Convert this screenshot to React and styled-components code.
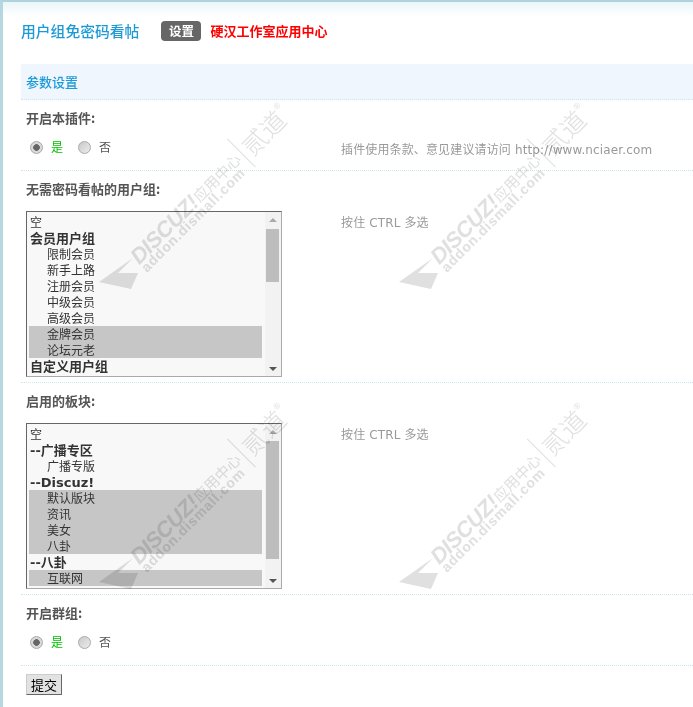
import React from "react";
import styled, { createGlobalStyle } from "styled-components";

const Global = createGlobalStyle`
  html, body { margin: 0; padding: 0; background: #fff; }
  body { font: 13px/16px "Noto Sans CJK SC", "Liberation Sans", sans-serif; color: #555; }
`;

const Page = styled.div`
  position: relative;
  box-sizing: border-box;
  width: 693px;
  height: 707px;
  overflow: hidden;
  padding: 0 0 0 18px;
  border-left: 3px solid #b4d7e0;
  border-top: 2px solid #aed3dd;
  background: linear-gradient(#eaf5fa, #fff 14px);
`;

const TitleBar = styled.div`
  display: flex;
  align-items: center;
  height: 62px;
  padding-bottom: 4px;
  box-sizing: border-box;
`;

const PluginName = styled.h1`
  margin: 0 22px 0 0;
  font-size: 14.8px;
  font-weight: 500;
  color: #1c9ad6;
  white-space: nowrap;
`;

const SettingsBadge = styled.span`
  display: block;
  width: 40px;
  height: 20px;
  line-height: 20px;
  border-radius: 4px;
  background: #666;
  color: #fff;
  font-size: 12.5px;
  font-weight: 700;
  text-align: center;
  margin-right: 9px;
`;

const StudioLink = styled.span`
  color: #f00;
  font-size: 13px;
  font-weight: 700;
`;

const SectionHead = styled.h2`
  margin: 0;
  height: 35px;
  line-height: 36px;
  padding-left: 5px;
  background: #f0f6fd;
  border-bottom: 1px dotted #cfe3ee;
  font-size: 13px;
  font-weight: 500;
  color: #1c9ad6;
`;

const Field = styled.section`
  border-bottom: 1px dotted #cfe3ee;
  padding-left: 5px;
`;

const FieldLabel = styled.div`
  height: 36px;
  line-height: 36px;
  font-weight: 700;
  color: #555;
  font-size: 13px;
`;

const FieldBody = styled.div`
  display: grid;
  grid-template-columns: 315px 1fr;
  align-items: start;
  padding-top: ${(p) => p.$pt}px;
  padding-bottom: ${(p) => p.$pb}px;
`;

const RadioRow = styled.div`
  display: flex;
  align-items: center;
  height: 22px;
  padding-left: 4px;
`;

const Radio = styled.input.attrs({ type: "radio" })`
  appearance: none;
  box-sizing: border-box;
  width: 13px;
  height: 13px;
  margin: 0 8px 0 0;
  border-radius: 50%;
  border: 1px solid #aaa;
  background: ${(p) =>
    p.defaultChecked
      ? "radial-gradient(circle, #666 0 3px, #d8d8d8 3.6px)"
      : "linear-gradient(135deg, #c9c9c9, #ececec)"};
`;

const RadioText = styled.label`
  color: ${(p) => p.$color};
  font-size: 12px;
  margin-right: 15px;
`;

const Hint = styled.div`
  color: #999;
  font: 12px/16px "DejaVu Sans", "Noto Sans CJK SC", sans-serif;
  letter-spacing: 0.14px;
  white-space: nowrap;
  padding-top: ${(p) => p.$top}px;
`;

const Listbox = styled.div`
  display: flex;
  box-sizing: border-box;
  width: 256px;
  height: 166px;
  border: 1px solid #aaa;
  border-top-color: #666;
  border-left-color: #666;
  background: #f8f8f8;
  overflow: hidden;
`;

const OptionList = styled.div`
  flex: 1;
  padding: 2px 3px 0 2px;
  overflow: hidden;
  color: #333;
`;

const Option = styled.div`
  height: 16px;
  line-height: 18px;
  padding-left: ${(p) => (p.$child ? 18 : 1)}px;
  font-family: "DejaVu Sans", "Noto Sans CJK SC", sans-serif;
  font-size: ${(p) => (p.$group ? 13 : 12)}px;
  white-space: nowrap;
  font-weight: ${(p) => (p.$group ? 700 : 400)};
  background: ${(p) => (p.$selected ? "#c6c6c6" : "transparent")};
`;

const ScrollTrack = styled.div`
  position: relative;
  width: 16px;
  background: #f2f2f2;
  flex: none;
`;

const Thumb = styled.div`
  position: absolute;
  left: 1px;
  top: ${(p) => p.$top}px;
  width: 13px;
  height: ${(p) => p.$h}px;
  background: #bdbdbd;
`;

const Arrow = styled.span`
  position: absolute;
  left: 4px;
  ${(p) => (p.$down ? "bottom: 5px;" : "top: 6px;")}
  border-left: 4px solid transparent;
  border-right: 4px solid transparent;
  ${(p) => (p.$down ? "border-top: 4px solid #555;" : "border-bottom: 4px solid #aaa;")}
`;

const SubmitBar = styled.div`
  padding: 8px 0 0 5px;
`;

const SubmitButton = styled.button`
  box-sizing: border-box;
  display: block;
  width: 36px;
  height: 21px;
  padding: 0;
  font: 13px/18px "Noto Sans CJK SC", sans-serif;
  color: #000;
  background: #e2e2e2;
  border: 1px solid;
  border-color: #ccc #666 #666 #ccc;
`;

const WatermarkLayer = styled.div`
  position: absolute;
  inset: 0;
  pointer-events: none;
  mix-blend-mode: multiply;
`;

const MarkTile = styled.div`
  position: absolute;
  left: ${(p) => p.$x}px;
  top: ${(p) => p.$y}px;
  width: 0;
  height: 0;
  color: #e0e0e0;
`;

const MarkArrow = styled.svg`
  position: absolute;
  left: -1px;
  top: 1px;
`;

const MarkText = styled.div`
  position: absolute;
  left: 25px;
  top: -6px;
  width: 270px;
  height: 50px;
  transform: rotate(-45deg);
  transform-origin: 0 0;
  white-space: nowrap;
`;

const MarkTop = styled.div`
  position: absolute;
  left: 0;
  top: 0;
  display: flex;
  align-items: center;
  height: 26px;
`;

const MarkBrand = styled.span`
  font: italic 700 22px/26px "Liberation Sans", sans-serif;
  letter-spacing: -0.5px;
`;

const MarkCn = styled.span`
  font-size: 15px;
  margin-left: 1px;
`;

const MarkBar = styled.span`
  width: 1px;
  height: 40px;
  background: #e0e0e0;
  margin: 0 5px 0 4px;
`;

const MarkName = styled.span`
  font-size: 25px;
  font-weight: 300;
`;

const MarkReg = styled.span`
  font: 9px "Liberation Sans", sans-serif;
  align-self: flex-start;
`;

const MarkSub = styled.div`
  position: absolute;
  left: 0;
  top: 18px;
  font: 700 14px/16px "Liberation Sans", sans-serif;
  letter-spacing: 0.8px;
`;

const Watermark = ({ x, y }) => (
  <MarkTile $x={x} $y={y}>
    <MarkArrow width="40" height="32" viewBox="0 0 40 32" fill="#e0e0e0">
      <path d="M0 24 L34 0 L19 15 L39 15 L32 31 Z" />
    </MarkArrow>
    <MarkText>
      <MarkTop>
        <MarkBrand>DISCUZ!</MarkBrand>
        <MarkCn>应用中心</MarkCn>
        <MarkBar />
        <MarkName>贰道</MarkName>
        <MarkReg>®</MarkReg>
      </MarkTop>
      <MarkSub>addon.dismall.com</MarkSub>
    </MarkText>
  </MarkTile>
);

const groups = [
  ["空"],
  ["会员用户组", "g"],
  ["限制会员", "c"],
  ["新手上路", "c"],
  ["注册会员", "c"],
  ["中级会员", "c"],
  ["高级会员", "c"],
  ["金牌会员", "c", 1],
  ["论坛元老", "c", 1],
  ["自定义用户组", "g"],
];

const forums = [
  ["空"],
  ["--广播专区", "g"],
  ["广播专版", "c"],
  ["--Discuz!", "g"],
  ["默认版块", "c", 1],
  ["资讯", "c", 1],
  ["美女", "c", 1],
  ["八卦", "c", 1],
  ["--八卦", "g"],
  ["互联网", "c", 1],
];

const List = ({ items, thumbTop, thumbH }) => (
  <Listbox>
    <OptionList>
      {items.map(([t, k, s]) => (
        <Option key={t} $group={k === "g"} $child={k === "c"} $selected={!!s}>
          {t}
        </Option>
      ))}
    </OptionList>
    <ScrollTrack>
      <Arrow />
      <Thumb $top={thumbTop} $h={thumbH} />
      <Arrow $down />
    </ScrollTrack>
  </Listbox>
);

const YesNo = ({ name }) => (
  <RadioRow>
    <Radio name={name} defaultChecked />
    <RadioText $color="#00c000">是</RadioText>
    <Radio name={name} />
    <RadioText $color="#555">否</RadioText>
  </RadioRow>
);

export default function App() {
  return (
    <Page>
      <Global />
      <TitleBar>
        <PluginName>用户组免密码看帖</PluginName>
        <SettingsBadge>设置</SettingsBadge>
        <StudioLink>硬汉工作室应用中心</StudioLink>
      </TitleBar>
      <SectionHead>参数设置</SectionHead>
      <Field>
        <FieldLabel>开启本插件:</FieldLabel>
        <FieldBody $pt={0} $pb={12}>
          <YesNo name="enable" />
          <Hint $top={6}>插件使用条款、意见建议请访问 http://www.nciaer.com</Hint>
        </FieldBody>
      </Field>
      <Field>
        <FieldLabel>无需密码看帖的用户组:</FieldLabel>
        <FieldBody $pt={4} $pb={5}>
          <List items={groups} thumbTop={17} thumbH={53} />
          <Hint $top={4}>按住 CTRL 多选</Hint>
        </FieldBody>
      </Field>
      <Field>
        <FieldLabel>启用的板块:</FieldLabel>
        <FieldBody $pt={4} $pb={5}>
          <List items={forums} thumbTop={17} thumbH={118} />
          <Hint $top={4}>按住 CTRL 多选</Hint>
        </FieldBody>
      </Field>
      <Field>
        <FieldLabel>开启群组:</FieldLabel>
        <FieldBody $pt={0} $pb={12}>
          <YesNo name="group" />
        </FieldBody>
      </Field>
      <SubmitBar>
        <SubmitButton>提交</SubmitButton>
      </SubmitBar>
      <WatermarkLayer>
        <Watermark x={97} y={255} />
        <Watermark x={397} y={255} />
        <Watermark x={97} y={555} />
        <Watermark x={397} y={555} />
      </WatermarkLayer>
    </Page>
  );
}
